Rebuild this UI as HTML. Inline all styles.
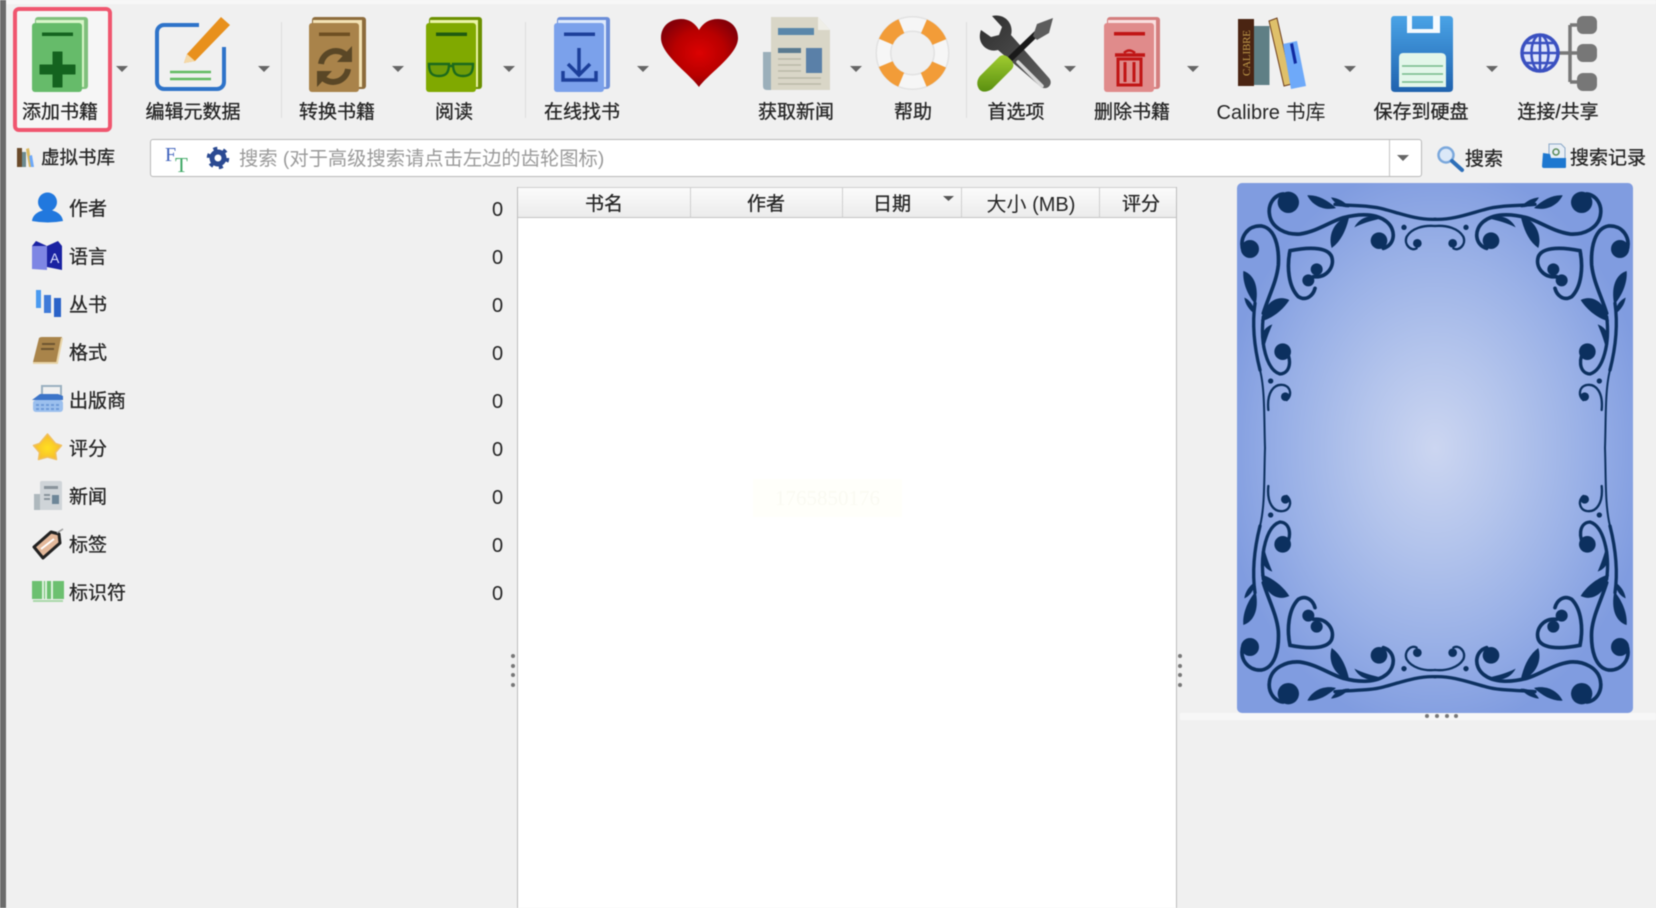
<!DOCTYPE html>
<html lang="zh">
<head>
<meta charset="utf-8">
<title>calibre</title>
<style>
html,body{margin:0;padding:0;width:1656px;height:908px;overflow:hidden;background:#f0f0f0}
#app{position:absolute;left:0;top:0;width:1656px;height:908px;background:#f0f0f0;overflow:hidden;filter:blur(.6px);font-family:"Liberation Sans","Noto Sans CJK SC",sans-serif;font-size:19px;color:#262626}
.t{position:absolute;height:24px;line-height:24px;white-space:nowrap}
.c{transform:translateX(-50%)}
.b{-webkit-text-stroke:.3px #262626}
.n{font-size:20px}
#gfx{position:absolute;left:0;top:0}
</style>
</head>
<body>
<div id="app">
<div style="position:absolute;left:0;top:0;width:6px;height:908px;background:#6b6b6b"></div>
<div style="position:absolute;left:6px;top:0;width:1650px;height:4px;background:#f7f7f7"></div>
<div style="position:absolute;left:13px;top:7px;width:91px;height:117px;border:4px solid #f0566f;border-radius:6px;background:#f6f6f6"></div>
<div style="position:absolute;left:150px;top:139px;width:1270px;height:36px;background:#fff;border:1px solid #b9b9b9;border-radius:3px"></div>
<div style="position:absolute;left:1389px;top:140px;width:1px;height:36px;background:#c4c4c4"></div>
<div style="position:absolute;left:517px;top:187px;width:658px;height:721px;background:#fff;border-left:1px solid #bdbdbd;border-right:1px solid #bdbdbd"></div>
<div style="position:absolute;left:518px;top:187px;width:658px;height:29px;background:linear-gradient(#fbfbfb,#ececec);border-top:1px solid #cfcfcf;border-bottom:1px solid #c4c4c4"></div>
<div style="position:absolute;left:690px;top:188px;width:1px;height:29px;background:#cfcfcf"></div>
<div style="position:absolute;left:842px;top:188px;width:1px;height:29px;background:#cfcfcf"></div>
<div style="position:absolute;left:961px;top:188px;width:1px;height:29px;background:#cfcfcf"></div>
<div style="position:absolute;left:1099px;top:188px;width:1px;height:29px;background:#cfcfcf"></div>
<div style="position:absolute;left:1180px;top:713px;width:476px;height:7px;background:#f7f7f7"></div>
<div style="position:absolute;left:753px;top:479px;width:149px;height:38px;background:#fffffa"></div>
<div style="position:absolute;left:753px;top:479px;width:149px;height:38px;line-height:38px;text-align:center;font-family:'Liberation Serif',serif;font-size:21px;color:#fafaf2">1765850176</div>

<!-- cover -->
<div style="position:absolute;left:1237px;top:183px;width:396px;height:530px;border-radius:5px;background:radial-gradient(ellipse 215px 285px at 50% 50%,#ccd6f1 0%,#b3c4ec 35%,#9ab1e7 68%,#809ce0 100%)"></div>
<svg style="position:absolute;left:1237px;top:183px" width="396" height="530" viewBox="51 39 1188 1590" xmlns="http://www.w3.org/2000/svg">
<defs>
<g id="q" fill="none" stroke="#0c305f" stroke-linecap="round">
<path stroke-width="10" d="M645 148C590 150 540 130 490 117C450 106 400 108 345 103"/>
<path fill="#0c305f" stroke="none" d="M262 76C292 74 322 90 348 114C318 122 280 112 262 76ZM333 82C354 84 374 94 388 112C366 113 344 102 333 82Z"/>
<path stroke-width="11" d="M190 72C160 75 145 105 148 130C152 175 200 195 240 192C290 185 330 155 370 143C420 130 470 130 500 155C530 180 525 225 490 235"/>
<circle cx="205" cy="97" r="32" fill="#0c305f" stroke="none"/>
<circle cx="477" cy="212" r="25" fill="#0c305f" stroke="none"/>
<path fill="#0c305f" stroke="none" d="M388 138C348 148 322 190 335 234C364 214 380 176 388 138ZM403 172C418 143 450 131 484 145C456 152 430 158 403 172Z"/>
<path stroke-width="7" d="M645 168C610 165 575 175 560 200C550 225 575 245 590 235"/>
<circle cx="592" cy="220" r="13" fill="#0c305f" stroke="none"/>
<circle cx="552" cy="172" r="8" fill="#0c305f" stroke="none"/>
<path stroke-width="11" d="M70 245C55 200 85 165 125 168C165 175 178 230 175 285C170 335 145 380 130 430"/>
<circle cx="90" cy="237" r="27" fill="#0c305f" stroke="none"/>
<path stroke-width="10" d="M105 400C95 470 105 540 120 600"/>
<path stroke-width="6" d="M120 600C135 660 132 740 135 834"/>
<path stroke-width="10" d="M130 440C120 520 140 600 180 612C215 610 215 560 195 540"/>
<circle cx="188" cy="545" r="25" fill="#0c305f" stroke="none"/>
<path stroke-width="7" d="M145 720C140 670 160 640 190 645C215 650 215 680 200 690"/>
<circle cx="196" cy="680" r="13" fill="#0c305f" stroke="none"/>
<circle cx="152" cy="633" r="8" fill="#0c305f" stroke="none"/>
<path stroke-width="11" d="M280 320C320 325 345 290 335 260C325 235 280 228 210 242C200 290 205 350 235 380C260 395 280 375 285 355"/>
<circle cx="290" cy="298" r="18" fill="#0c305f" stroke="none"/>
<circle cx="265" cy="331" r="18" fill="#0c305f" stroke="none"/>
<path fill="#0c305f" stroke="none" d="M208 390C170 372 132 400 123 454C152 448 188 422 208 390ZM70 303C102 313 118 350 107 404C85 378 67 340 70 303ZM73 383C90 390 105 410 104 432C88 420 76 404 73 383ZM157 463C128 473 117 500 130 544C137 512 147 487 157 463Z"/>
</g>
</defs>
<use href="#q"/>
<use href="#q" transform="matrix(-1 0 0 1 1290 0)"/>
<use href="#q" transform="matrix(1 0 0 -1 0 1668)"/>
<use href="#q" transform="matrix(-1 0 0 -1 1290 1668)"/>
</svg>

<svg id="gfx" width="1656" height="908" viewBox="0 0 1656 908" xmlns="http://www.w3.org/2000/svg">
<defs>
<radialGradient id="hg" cx=".5" cy=".5" r=".55"><stop offset="0" stop-color="#dc0202"/><stop offset=".6" stop-color="#b80000"/><stop offset="1" stop-color="#860008"/></radialGradient>
<linearGradient id="fg" x1="0" y1="0" x2="0" y2="1"><stop offset="0" stop-color="#4aa3e6"/><stop offset="1" stop-color="#1f62ae"/></linearGradient>
<linearGradient id="sd" x1="0" y1="0" x2="0" y2="1"><stop offset="0" stop-color="#a0cc30"/><stop offset="1" stop-color="#5a9010"/></linearGradient>
<radialGradient id="st" cx=".5" cy=".55" r=".55"><stop offset="0" stop-color="#ffe020"/><stop offset="1" stop-color="#f5b830"/></radialGradient>
<linearGradient id="wr" x1="0" y1="0" x2="1" y2="1"><stop offset="0" stop-color="#2d2d2d"/><stop offset="1" stop-color="#606060"/></linearGradient>
</defs>

<!-- separators -->
<g fill="#dedede"><rect x="281" y="22" width="1" height="96"/><rect x="525" y="22" width="1" height="96"/><rect x="966" y="22" width="1" height="96"/></g>

<!-- dropdown arrows -->
<g fill="#666">
<path d="M116 66h12l-6 6z"/><path d="M258 66h12l-6 6z"/><path d="M392 66h12l-6 6z"/><path d="M503 66h12l-6 6z"/>
<path d="M637 66h12l-6 6z"/><path d="M850 66h12l-6 6z"/><path d="M1064 66h12l-6 6z"/><path d="M1187 66h12l-6 6z"/>
<path d="M1344 66h12l-6 6z"/><path d="M1486 66h12l-6 6z"/><path d="M1397 155h12l-6 6z"/>
</g>

<!-- add book -->
<g transform="translate(32 17)">
<rect x="3" width="53" height="72" rx="3" fill="#7fc07c"/><rect x="4" y="3" width="48" height="67" fill="#d9f6c9"/><rect y="6" width="50" height="69" rx="3" fill="#66bb6a"/>
<rect x="10" y="15.5" width="31" height="3.500" fill="#14631f"/>
<path d="M21 36h9v13h13v9H30v13h-9V58H8v-9h13z" transform="translate(0 -1)" fill="#14631f" stroke="#14631f" stroke-width="1" stroke-linejoin="round"/>
</g>

<!-- edit metadata -->
<path d="M199 25H164a7 7 0 0 0-7 7v50a7 7 0 0 0 7 7h53a7 7 0 0 0 7-7V47" fill="none" stroke="#2e73c9" stroke-width="4"/>
<path d="M184 63l3-9 34-37 9 8-35 36z" fill="#e8901c"/><path d="M184 63l3-9 8 7z" fill="#f4d9a8"/>
<path d="M170 72h41M170 79h41" stroke="#62bb62" stroke-width="2.500"/>

<!-- convert book -->
<g transform="translate(309 17)">
<rect x="3" width="54" height="72" rx="3" fill="#8d6c3c"/><rect x="4" y="3" width="49" height="67" fill="#f3e3b5"/><rect y="6" width="50" height="69" rx="3" fill="#a9834a"/>
<rect x="10" y="15.5" width="31" height="3.500" fill="#6e4f22"/>
<path d="M12 47a15 15 0 0 1 25-9" fill="none" stroke="#5a4726" stroke-width="6"/><path d="M43 29v16H28z" fill="#5a4726"/>
<path d="M39 52a15 15 0 0 1-25 9" fill="none" stroke="#5a4726" stroke-width="6"/><path d="M8 70V54h15z" fill="#5a4726"/>
</g>

<!-- read -->
<g transform="translate(426 17)">
<rect x="3" width="53" height="72" rx="3" fill="#6b9000"/><rect x="4" y="3" width="48" height="67" fill="#eaf3a8"/><rect y="6" width="50" height="69" rx="3" fill="#80a900"/>
<rect x="10" y="15.5" width="31" height="3.500" fill="#1f5a10"/>
<path d="M3 47h20c0 9-3 12-10 12S3 56 3 47zM27 47h20c0 9-3 12-10 12s-10-3-10-12zM23 49h4" fill="#6f9c08" stroke="#1c6a1c" stroke-width="2.400"/>
</g>

<!-- online -->
<g transform="translate(554 17)">
<rect x="3" width="53" height="72" rx="3" fill="#6b8dd8"/><rect x="4" y="3" width="48" height="67" fill="#dde9fb"/><rect y="6" width="50" height="69" rx="3" fill="#7ba1eb"/>
<rect x="10" y="15.5" width="31" height="3.500" fill="#1c3f9a"/>
<path d="M25 31v27M14 47l11 11 11-11" fill="none" stroke="#1c3f9a" stroke-width="3.500"/>
<path d="M9 54v9h33v-9" fill="none" stroke="#1c3f9a" stroke-width="3.500"/>
</g>

<!-- heart -->
<path d="M699 87C690 74 661 55 661 38C661 26 670 19 681 19C689 19 695 23 699 30C703 23 709 19 718 19C729 19 738 26 738 38C738 55 708 74 699 87Z" fill="url(#hg)"/>

<!-- news -->
<path d="M771 17H818L830 30V90H771Z" fill="#d9d6c7"/><path d="M818 17L830 30H818Z" fill="#efeee7"/>
<path d="M763 52H771V90H767Q763 90 763 86Z" fill="#9bafba"/>
<rect x="778" y="28" width="36" height="7" fill="#5a87aa"/><rect x="806" y="48" width="16" height="25" fill="#5a80a8"/><rect x="778" y="48" width="23" height="5" fill="#5a7a90"/>
<path d="M778 59h23M778 65h23M778 71h23M778 78h43M778 84h43" stroke="#bcbaa9" stroke-width="1.600"/>

<!-- help -->
<circle cx="912.500" cy="53" r="29" fill="none" stroke="#e2e2e2" stroke-width="16"/>
<circle cx="912.500" cy="53" r="29" fill="none" stroke="#f6f6f6" stroke-width="13"/>
<circle cx="912.500" cy="53" r="29" fill="none" stroke="#f29c38" stroke-width="15" stroke-dasharray="22.500 23.060" stroke-dashoffset="11.250" transform="rotate(45 912.500 53)"/>

<!-- preferences -->
<path d="M981 30c-5 14 7 23 17 20l43 37c6 4 13-3 8-9l-38-43c3-10-5-22-19-19l10 11-3 8-8 2z" fill="url(#wr)"/>
<path d="M1018 62l24 24" stroke="#d8d8d8" stroke-width="3.500" stroke-linecap="round"/>
<path d="M1010 59l27-26" stroke="#1a1a1a" stroke-width="6"/>
<path d="M1033 36l4-12 16-6-4 15-12 7z" fill="#5c5c5c"/>
<path d="M980 76l19-19c3-3 6-2 9 0l4 4c2 3 2 6-1 9l-19 19c-6 4-11 3-13 0s-3-8 1-13z" fill="url(#sd)"/>

<!-- delete -->
<g transform="translate(1104 17)">
<rect x="3" width="53" height="72" rx="3" fill="#d47e7e"/><rect x="4" y="3" width="48" height="67" fill="#f9dfdf"/><rect y="6" width="50" height="69" rx="3" fill="#e08b8b"/>
<rect x="10" y="15" width="31" height="3.500" fill="#c01515"/>
<path d="M11 38h30" stroke="#c01515" stroke-width="3.500"/><path d="M20 36q5-5 11 0" fill="none" stroke="#c01515" stroke-width="2.500"/>
<path d="M14 42h23v26H14zM21 45v20M30 45v20" fill="none" stroke="#c01515" stroke-width="3"/>
</g>

<!-- calibre library -->
<rect x="1238" y="19" width="16" height="67" fill="#4a2412"/>
<text transform="translate(1250 76) rotate(-90)" font-family="Liberation Serif,serif" font-size="11" fill="#c09a4a" textLength="46">CALIBRE</text>
<rect x="1254" y="26" width="15.500" height="59" fill="#5f7f85"/>
<path d="M1269 21l8-3 15 66-8 2z" fill="#dfc06a" stroke="#6b3a1a" stroke-width="1"/>
<path d="M1283 44l14-3 9 45-15 3z" fill="#6ea9f9"/><path d="M1290 44l3-1 4 20-3 1z" fill="#102aa0"/>

<!-- save -->
<path d="M1394 16h55q4 0 4 4v68q0 4-4 4h-54q-4 0-4-4V20q0-4 3-4z" fill="url(#fg)"/>
<path d="M1407 16h5v13h21V16h7v17h-33z" fill="#ffffff" fill-opacity=".95"/>
<path d="M1403 53h38q5 0 5 5v29h-47V58q0-5 4-5z" fill="#e3f6ea"/>
<path d="M1402 66h41M1402 74h41M1402 82h41" stroke="#74b98a" stroke-width="1.500"/>

<!-- connect -->
<path d="M1559 53h11M1570 25v57M1570 25h8M1570 53h8M1570 82h8" fill="none" stroke="#777" stroke-width="3.500"/>
<rect x="1577" y="16" width="20" height="18" rx="6" fill="#777"/><rect x="1577" y="44" width="20" height="18" rx="6" fill="#777"/><rect x="1577" y="73" width="20" height="18" rx="6" fill="#777"/>
<g fill="none" stroke="#3a50c0"><circle cx="1540" cy="53" r="18" stroke-width="3.500" fill="#dfe6fb"/><ellipse cx="1540" cy="53" rx="8.500" ry="18" stroke-width="2.500"/><path d="M1540 35v36M1522 53h36M1525 43h30M1525 63h30" stroke-width="2.500"/></g>

<!-- virtual library icon -->
<rect x="17" y="148" width="5" height="19" fill="#6a4a2a"/><rect x="22" y="152" width="4" height="15" fill="#6d8a90"/><path d="M26 149l3-1 3 19h-3z" fill="#d9b860"/><path d="M29 156l3-1 2 12h-3z" fill="#6ea9f9"/>

<!-- FT and gear -->
<text x="165" y="161" font-family="Liberation Serif,serif" font-size="20" fill="#3f62bc">F</text>
<text x="175" y="172" font-family="Liberation Serif,serif" font-size="21" fill="#3fa866">T</text>
<g fill="none" stroke="#2b4a92"><circle cx="218" cy="158" r="6" stroke-width="5"/><circle cx="218" cy="158" r="9.500" stroke-width="3.500" stroke-dasharray="4 5.950"/></g>

<!-- search magnifier -->
<circle cx="1446" cy="155" r="7.500" fill="#dbe8f8" stroke="#7ba8dc" stroke-width="2.500"/><path d="M1452 161l10 9" stroke="#2e6fb8" stroke-width="4" stroke-linecap="round"/>

<!-- history icon -->
<path d="M1549 144h12l4 4v12h-16z" fill="#e8eef5" stroke="#8aa8c8"/><circle cx="1556" cy="152" r="3" fill="none" stroke="#5a8a5a" stroke-width="1.500"/>
<path d="M1543 153l7 1 1 4h15v9q0 1-1 1h-21q-2 0-2-2z" fill="#1e78d0"/>

<!-- sort arrow -->
<path d="M943 196h11l-5.500 5z" fill="#555"/>

<!-- splitters -->
<g fill="#777"><circle cx="513" cy="656" r="2"/><circle cx="513" cy="666" r="2"/><circle cx="513" cy="675" r="2"/><circle cx="513" cy="685" r="2"/>
<circle cx="1180" cy="656" r="2"/><circle cx="1180" cy="666" r="2"/><circle cx="1180" cy="675" r="2"/><circle cx="1180" cy="685" r="2"/>
<circle cx="1427" cy="716" r="2"/><circle cx="1437" cy="716" r="2"/><circle cx="1447" cy="716" r="2"/><circle cx="1456" cy="716" r="2"/></g>

<!-- sidebar icons -->
<circle cx="47.500" cy="202" r="9.500" fill="#2178de"/><path d="M32 221c1-8 9-10 12-11h7c3 1 11 3 12 11q-15 3-31 0z" fill="#2178de"/>
<path d="M32 246l15 0v24l-15-1z" fill="#7e86e4"/><path d="M47 246h15v24l-15-3z" fill="#1a22a2"/><path d="M36 241l11 5 11-5 4 5H32z" fill="#1a22a2"/>
<text x="50" y="263" font-family="Liberation Sans,sans-serif" font-size="14" fill="#dde2ff">A</text>
<path d="M36 290h5v18h-5z" fill="#4a9af0"/><path d="M44 295h7v18h-7z" fill="#3f7ad8"/><path d="M54 298h7v19h-7z" fill="#2a62c8"/>
<path d="M39 338q1-1 3-1h20l-5 25q-1 2-3 2H36q-3 0-3-2z" fill="#a9844a"/><path d="M33 363h24l5-25" fill="none" stroke="#e8d4a8" stroke-width="2"/><path d="M42 344h13M41 349h13" stroke="#6e5530" stroke-width="2"/>
<path d="M42 396v-10h19v10" fill="none" stroke="#9ab0c0" stroke-width="2"/><path d="M32 400l8-6h18l5 2v4z" fill="#3c74c8"/><rect x="33" y="400" width="30" height="12" rx="3" fill="#9cc0ee"/><path d="M36 405h24M36 409h24" stroke="#6e9bd8" stroke-width="2" stroke-dasharray="3 2"/>
<path d="M47.500 434l8 9.500 6 2-6 7 1 7-9-2.500-9 2.500 1-7-6-7 6-2z" fill="url(#st)" stroke="#f0c060" stroke-width="1.500" stroke-linejoin="round"/>
<path d="M42 481h18q2 0 2 2v27H40v-27q0-2 2-2z" fill="#cfd4d8"/><rect x="34" y="494" width="6" height="16" fill="#aeb8bd"/><rect x="44" y="486" width="14" height="3" fill="#8a949c"/><rect x="52" y="495" width="7" height="9" fill="#6d8698"/><path d="M44 495h6M44 499h6" stroke="#8a949c" stroke-width="2"/>
<path d="M34 547l17-15 8 2 1 9-17 15z" fill="#e3b89a" stroke="#222" stroke-width="3" stroke-linejoin="round"/><path d="M41 549l13-10" stroke="#fff" stroke-width="2"/><path d="M57 533l6-4" stroke="#999" stroke-width="1.500"/>
<rect x="32" y="581" width="32" height="18" fill="#6cc070"/><path d="M43 581v18M46 581v18M52 581v18" stroke="#dff2df" stroke-width="2"/><path d="M33 601h30" stroke="#aad8aa" stroke-width="2"/>
</svg>

<!-- toolbar labels -->
<div class="t c b" style="left:60px;top:101px">添加书籍</div>
<div class="t c b" style="left:193px;top:101px">编辑元数据</div>
<div class="t c b" style="left:337px;top:101px">转换书籍</div>
<div class="t c b" style="left:454px;top:101px">阅读</div>
<div class="t c b" style="left:582px;top:101px">在线找书</div>
<div class="t c b" style="left:796px;top:101px">获取新闻</div>
<div class="t c b" style="left:913px;top:101px">帮助</div>
<div class="t c b" style="left:1016px;top:101px">首选项</div>
<div class="t c b" style="left:1132px;top:101px">删除书籍</div>
<div class="t c" style="left:1271px;top:101px;font-size:20px">Calibre 书库</div>
<div class="t c b" style="left:1421px;top:101px">保存到硬盘</div>
<div class="t c b" style="left:1558px;top:101px">连接/共享</div>

<!-- search row -->
<div class="t c b" style="left:78px;top:146px;font-size:18.500px">虚拟书库</div>
<div class="t" style="left:239px;top:148px;color:#9a9a9a;font-size:19.300px">搜索 (对于高级搜索请点击左边的齿轮图标)</div>
<div class="t c b" style="left:1484px;top:148px">搜索</div>
<div class="t c b" style="left:1608px;top:147px">搜索记录</div>

<!-- table header -->
<div class="t c b" style="left:604px;top:193px">书名</div>
<div class="t c b" style="left:766px;top:193px">作者</div>
<div class="t c b" style="left:892px;top:193px">日期</div>
<div class="t c" style="left:1031px;top:193px;font-size:20px">大小 (MB)</div>
<div class="t c b" style="left:1141px;top:193px">评分</div>

<!-- sidebar labels -->
<div class="t b" style="left:69px;top:198px">作者</div><div class="t n" style="left:492px;top:198px">0</div>
<div class="t b" style="left:69px;top:246px">语言</div><div class="t n" style="left:492px;top:246px">0</div>
<div class="t b" style="left:69px;top:294px">丛书</div><div class="t n" style="left:492px;top:294px">0</div>
<div class="t b" style="left:69px;top:342px">格式</div><div class="t n" style="left:492px;top:342px">0</div>
<div class="t b" style="left:69px;top:390px">出版商</div><div class="t n" style="left:492px;top:390px">0</div>
<div class="t b" style="left:69px;top:438px">评分</div><div class="t n" style="left:492px;top:438px">0</div>
<div class="t b" style="left:69px;top:486px">新闻</div><div class="t n" style="left:492px;top:486px">0</div>
<div class="t b" style="left:69px;top:534px">标签</div><div class="t n" style="left:492px;top:534px">0</div>
<div class="t b" style="left:69px;top:582px">标识符</div><div class="t n" style="left:492px;top:582px">0</div>
</div>
</body>
</html>
